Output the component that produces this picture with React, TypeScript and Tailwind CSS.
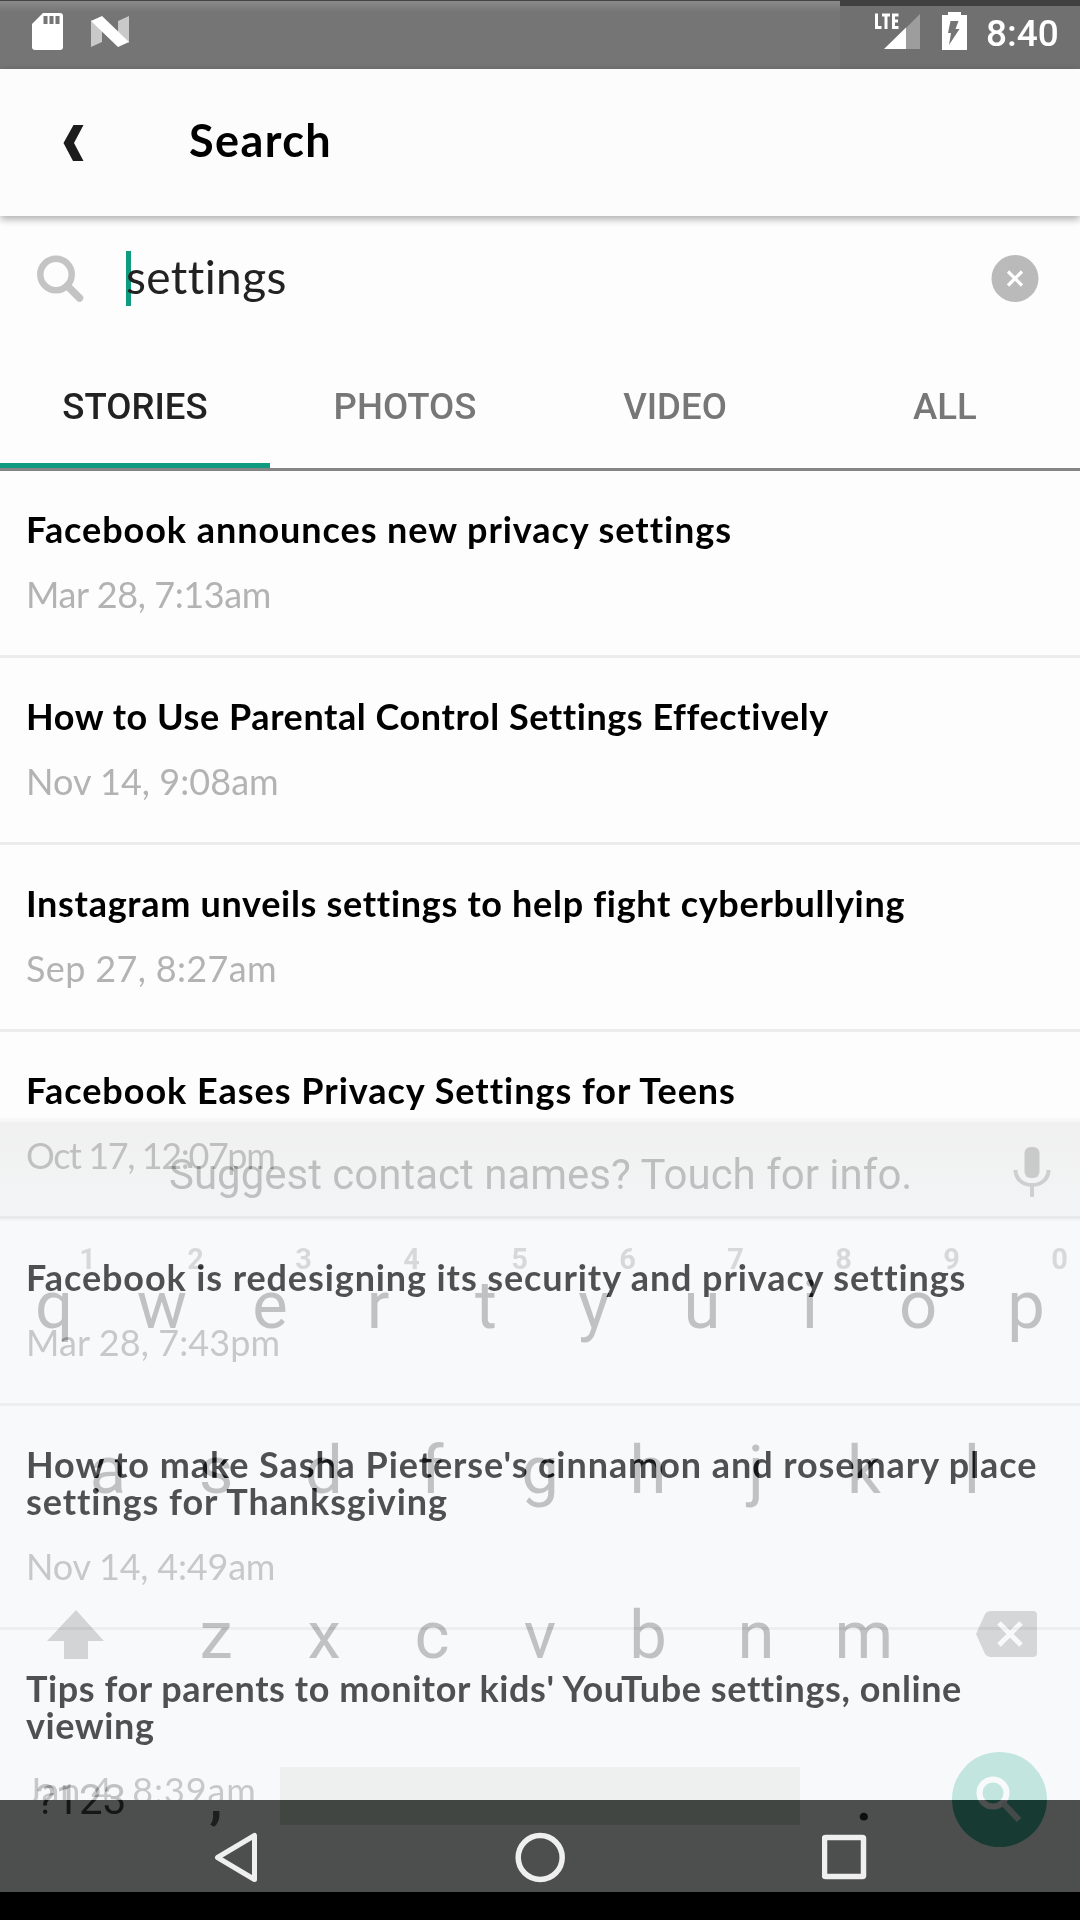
import React from "react";

type Story = { lines: string[]; date: string; tracking: string; dateTracking: string };

const stories: Story[] = [
  { lines: ["Facebook announces new privacy settings"], date: "Mar 28, 7:13am", tracking: "tracking-[0.94px]", dateTracking: "tracking-[-0.4px]" },
  { lines: ["How to Use Parental Control Settings Effectively"], date: "Nov 14, 9:08am", tracking: "tracking-[0.56px]", dateTracking: "tracking-[0.05px]" },
  { lines: ["Instagram unveils settings to help fight cyberbullying"], date: "Sep 27, 8:27am", tracking: "tracking-[0.69px]", dateTracking: "tracking-[0.35px]" },
  { lines: ["Facebook Eases Privacy Settings for Teens"], date: "Oct 17, 12:07pm", tracking: "tracking-[0.97px]", dateTracking: "tracking-[-1.4px]" },
  { lines: ["Facebook is redesigning its security and privacy settings"], date: "Mar 28, 7:43pm", tracking: "tracking-[0.89px]", dateTracking: "tracking-[0.1px]" },
  { lines: ["How to make Sasha Pieterse's cinnamon and rosemary place", "settings for Thanksgiving"], date: "Nov 14, 4:49am", tracking: "tracking-[0.93px]", dateTracking: "tracking-[-0.2px]" },
  { lines: ["Tips for parents to monitor kids' YouTube settings, online", "viewing"], date: "Jan 4, 8:39am", tracking: "tracking-[0.58px]", dateTracking: "tracking-[0.9px]" },
];

const topKeys = ["q", "w", "e", "r", "t", "y", "u", "i", "o", "p"];
const homeKeys = ["a", "s", "d", "f", "g", "h", "j", "k", "l"];
const bottomKeys = ["z", "x", "c", "v", "b", "n", "m"];

function StatusBar() {
  return (
    <div className="relative flex h-[69px] shrink-0 bg-[#757575]">
      <div className="absolute inset-x-0 top-0 h-3 border-t border-[#444] bg-linear-to-b from-[#8a8a8a] to-[#757575]" />
      <div className="absolute top-0 right-0 h-full w-[240px] border-t-6 border-[#404040] bg-[#707070]" />
      <div className="relative flex w-full justify-between pr-[22px] pl-[31px]">
        <div className="flex">
          <svg className="mt-[12px] h-[39px] w-8" viewBox="0 0 32 39">
            <path fill="#fff" d="M12 1h17a3 3 0 0 1 3 3v31a3 3 0 0 1-3 3H4a3 3 0 0 1-3-3V12z" />
            <path fill="#757575" d="M12.500 4h4v8h-4zM18.500 4h4v8h-4zM24.500 4h4v8h-4z" />
          </svg>
          <svg className="mt-[15px] ml-[27px] h-[34px] w-[40px]" viewBox="0 0 40 34">
            <path fill="#c9c9c9" d="M1 5l11 8v14L1 32zM28 6l11-5v27l-11-11z" />
            <path fill="#fff" d="M1 6L12 1l27 26-11 5z" />
          </svg>
        </div>
        <div className="flex">
          <svg className="mt-[12px] h-[39px] w-[48px]" viewBox="0 0 48 39">
            <path fill="#9d9d9d" d="M47 2v35H33V16z" />
            <path fill="#fff" d="M33 15.500V37H11z" />
            <path fill="none" stroke="#fff" strokeWidth="3" d="M3.500 1.500v14h5M9 3h8M13 3v14M25.500 3h-5v12.500h5M20.500 9h4.500" />
          </svg>
          <svg className="mt-[12px] ml-[21px] h-[38px] w-[25px]" viewBox="0 0 25 38">
            <path fill="#fff" d="M6 0h13v3h6v35H0V3h6z" />
            <path fill="#757575" d="M8.500 9h8l-3 8h4L7 33l2-12H6z" />
          </svg>
          <span className="ml-[19px] w-[72px] whitespace-nowrap text-[37px] leading-[67px] font-medium text-white">8:40</span>
        </div>
      </div>
    </div>
  );
}

function Tab({ label, active }: { label: string; active?: boolean }) {
  return (
    <div className={active ? "flex-1 border-b-5 border-[#0f9b80] text-center text-[#222]" : "flex-1 text-center text-[#777]"}>
      {label}
    </div>
  );
}

function Key({ label, hint }: { label: string; hint?: string }) {
  return (
    <div className="relative w-[108px] pt-11 text-center text-[67px] leading-[80px] text-[#383838]">
      {hint && <span className="absolute top-[21px] right-[12px] text-[29px] leading-[34px] font-bold text-[#212121]">{hint}</span>}
      {label}
    </div>
  );
}

function Keyboard() {
  return (
    <div className="absolute inset-x-0 top-[1120px] flex flex-col mix-blend-difference">
      <div className="flex h-[101px] justify-between pr-[29px] pl-[169px]">
        <span className="w-[760px] whitespace-nowrap text-[42px] leading-[109px] text-[#343434]">Suggest contact names? Touch for info.</span>
        <svg className="mt-[26px] h-[52px] w-[38px]" viewBox="0 0 38 52">
          <rect x="11.500" y="1" width="15" height="31" rx="6" fill="#282828" />
          <path d="M2.500 24c0 9 7 15 16.500 15s16.500-6 16.500-15M19 39v12" fill="none" stroke="#242424" strokeWidth="4" />
        </svg>
      </div>
      <div className="flex h-[165px]">
        {topKeys.map((k, i) => <Key key={k} label={k} hint={String((i + 1) % 10)} />)}
      </div>
      <div className="flex h-[165px] px-[54px]">
        {homeKeys.map((k) => <Key key={k} label={k} />)}
      </div>
      <div className="flex h-[165px]">
        <div className="w-[162px] pt-[59px] pl-[47px]">
          <svg className="h-[49px] w-[58px]" viewBox="0 0 58 49">
            <path fill="#262524" d="M29 0l28 31H41v18H17V31H0z" />
          </svg>
        </div>
        {bottomKeys.map((k) => <Key key={k} label={k} />)}
        <div className="w-[162px] pt-[60px] pl-[58px]">
          <svg className="h-[46px] w-[61px]" viewBox="0 0 61 46">
            <path fill="#232323" d="M14 0h43q4 0 4 4v38q0 4-4 4H14q-3 0-5-3L0 23 9 3q2-3 5-3z" />
            <path d="M23 12l22 22M45 12L23 34" stroke="#000" strokeWidth="5" />
          </svg>
        </div>
      </div>
      <div className="flex h-[165px]">
        <span className="w-[162px] pt-[60px] text-center text-[42px] leading-[48px] text-[#383838]">?123</span>
        <div className="w-[108px] pt-[43px] text-center text-[54px] leading-[80px] font-bold text-[#303030]">,</div>
        <div className="flex w-[540px] pt-[51px] pl-[10px]">
          <div className="h-[58px] w-[520px] bg-[#0b090b]" />
        </div>
        <div className="w-[108px] pt-11 text-center text-[60px] leading-[80px] font-medium text-[#404040]">.</div>
        <div className="w-[162px] pt-9 pl-[34px]">
          <svg className="size-[95px]" viewBox="0 0 95 95">
            <circle cx="47.500" cy="47.500" r="47.500" fill="#36141b" />
            <circle cx="41" cy="41" r="13.500" fill="none" stroke="#000" strokeWidth="6" />
            <path d="M51 51l16 17" stroke="#0a0506" strokeWidth="6" />
          </svg>
        </div>
      </div>
    </div>
  );
}

function NavigationIcons() {
  return (
    <div className="absolute inset-x-0 top-[1801px] flex h-[92px] items-center justify-between pt-[22px] pr-[212px] pl-[213px]">
      <svg className="h-[52px] w-[46px]" viewBox="0 0 46 52">
        <path d="M41.500 3.500v44L4.500 25.500z" fill="none" stroke="#efefef" strokeWidth="5" strokeLinejoin="round" />
      </svg>
      <svg className="h-[52px] w-[52px]" viewBox="0 0 52 52">
        <circle cx="25.200" cy="25.500" r="22" fill="none" stroke="#efefef" strokeWidth="5.500" />
      </svg>
      <svg className="h-[52px] w-[46px]" viewBox="0 0 46 52">
        <rect x="2.500" y="5.500" width="39" height="39" rx="1" fill="none" stroke="#efefef" strokeWidth="5.500" />
      </svg>
    </div>
  );
}

export default function App() {
  return (
    <div className="relative isolate flex h-[1920px] w-[1080px] flex-col overflow-hidden bg-[#fdfdfd] font-['Roboto',sans-serif]">
      <StatusBar />
      <header className="relative flex h-[147px] shrink-0 bg-[#fcfcfc] pl-[63px] shadow-[0_3px_8px_rgba(0,0,0,0.33)]">
        <svg className="mt-[55px] h-[38px] w-[21px]" viewBox="0 0 21 38">
          <path fill="#1c1c1c" d="M10.500 1H20.500l-9.500 18L20.500 37H10L0.500 19z" />
        </svg>
        <h1 className="mt-[41px] ml-[105px] font-['Lato',sans-serif] text-[45px] leading-[61px] font-bold tracking-[1.4px] text-black">Search</h1>
      </header>
      <div className="flex h-[127px] shrink-0 pr-[41px] pl-9">
        <svg className="mt-[38px] h-[50px] w-[50px]" viewBox="0 0 50 50">
          <circle cx="20" cy="20.500" r="15.700" fill="none" stroke="#c4c4c4" strokeWidth="6.500" />
          <path d="M31.500 32L43.500 44" stroke="#c4c4c4" strokeWidth="7.500" strokeLinecap="round" />
        </svg>
        <div className="relative mt-[35px] ml-[40px] h-[55px] w-[5px] bg-[#0f9b80]" />
        <span className="relative mt-[29px] -ml-[5px] flex-1 font-['Lato',sans-serif] text-[46px] leading-[63px] tracking-[0.4px] text-[#222]">settings</span>
        <svg className="mt-[38px] size-[48px]" viewBox="0 0 48 48">
          <circle cx="24" cy="24.500" r="23.500" fill="#bababa" />
          <path d="M17 17.500l14 14M31 17.500L17 31.500" stroke="#fff" strokeWidth="3.200" />
        </svg>
      </div>
      <div className="flex h-[128px] shrink-0 border-b-3 border-[#858585] pt-[1px] text-[36.600px] leading-[126px] font-medium">
        <Tab label="STORIES" active />
        <Tab label="PHOTOS" />
        <Tab label="VIDEO" />
        <Tab label="ALL" />
      </div>
      <main className="flex h-[1329px] shrink-0 flex-col overflow-hidden font-['Lato',sans-serif] text-[36px]">
        {stories.map((s) => (
          <article key={s.lines[0]} className="shrink-0 border-b-3 border-[#ececec] pt-[40px] pr-4 pb-[41px] pl-[26px]">
            <h2 className={"leading-[37px] font-bold text-black " + s.tracking}>
              {s.lines.map((l) => <span key={l} className="block whitespace-nowrap">{l}</span>)}
            </h2>
            <p className={"mt-[26px] leading-[40px] text-[#b3b3b3] " + s.dateTracking}>{s.date}</p>
          </article>
        ))}
      </main>
      <div className="h-[92px] shrink-0 bg-[#4d4f4e]" />
      <div className="flex-1 bg-black" />
      <div className="absolute inset-x-0 top-[1118px] flex h-[682px] flex-col">
        <div className="h-[4px] bg-[#e0e0e0]/20" />
        <div className="h-[99px] bg-linear-to-b from-[#d6d6d6]/33 to-[#e0e4e8]/33" />
        <div className="flex-1 bg-[#f0f3f6]/33" />
      </div>
      <Keyboard />
      <NavigationIcons />
    </div>
  );
}
